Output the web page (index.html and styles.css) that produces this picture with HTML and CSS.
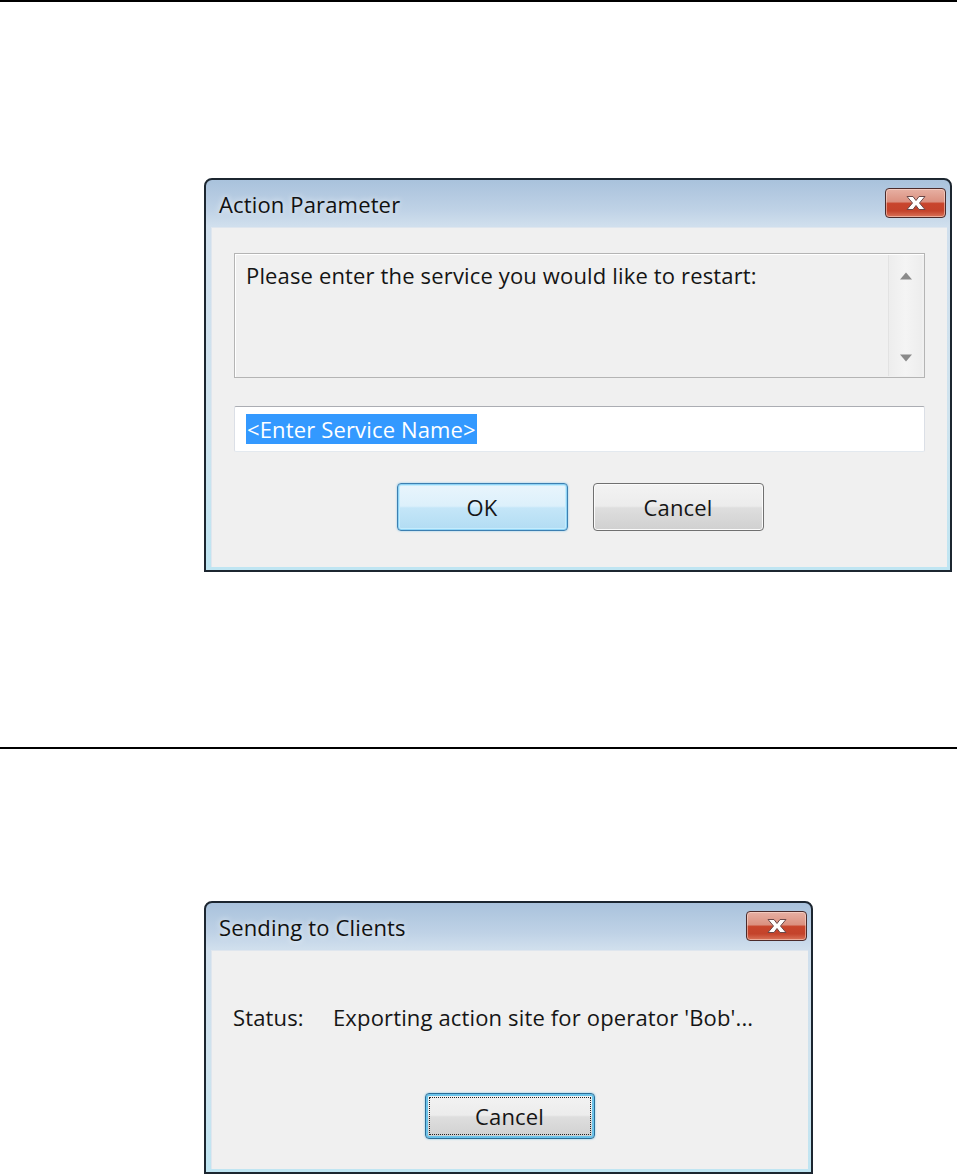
FILE: index.html
```html
<!DOCTYPE html>
<html>
<head>
<meta charset="utf-8">
<title>Dialogs</title>
<link rel="stylesheet" href="styles.css">
</head>
<body>
<div class="rule rule-top"></div>

<div class="dlg dlg-action">
  <div class="titlebar">
    <span class="title">Action Parameter</span>
    <div class="close">
      <svg width="24" height="16" viewBox="0 0 24 16"><path d="M3 1.5 L9 1.5 L12 5.5 L15 1.5 L21 1.5 L15.5 8 L21 14.5 L15 14.5 L12 10.5 L9 14.5 L3 14.5 L8.5 8 Z" fill="#fff" stroke="#6b4848" stroke-width="1" stroke-linejoin="round"/></svg>
    </div>
  </div>
  <div class="client">
    <div class="memo">
      <div class="memo-text">Please enter the service you would like to restart:</div>
      <div class="vscroll">
        <svg class="arrow" width="14" height="8" viewBox="0 0 14 8"><path d="M7 0.5 L13 7.5 L1 7.5 Z" fill="#8a8a8a"/></svg>
        <svg class="arrow" width="14" height="8" viewBox="0 0 14 8"><path d="M1 0.5 L13 0.5 L7 7.5 Z" fill="#8a8a8a"/></svg>
      </div>
    </div>
    <div class="textbox"><span class="sel">&lt;Enter Service Name&gt;</span></div>
    <div class="buttons">
      <div class="btn btn-default">OK</div>
      <div class="btn">Cancel</div>
    </div>
  </div>
</div>

<div class="rule rule-mid"></div>

<div class="dlg dlg-send">
  <div class="titlebar">
    <span class="title">Sending to Clients</span>
    <div class="close">
      <svg width="24" height="16" viewBox="0 0 24 16"><path d="M3 1.5 L9 1.5 L12 5.5 L15 1.5 L21 1.5 L15.5 8 L21 14.5 L15 14.5 L12 10.5 L9 14.5 L3 14.5 L8.5 8 Z" fill="#fff" stroke="#6b4848" stroke-width="1" stroke-linejoin="round"/></svg>
    </div>
  </div>
  <div class="client client-send">
    <div class="status-row">
      <span class="status-label">Status:</span>
      <span class="status-text">Exporting action site for operator 'Bob'...</span>
    </div>
    <div class="buttons buttons-send">
      <div class="btn btn-focus"><span class="focus-rect">Cancel</span></div>
    </div>
  </div>
</div>
</body>
</html>
```

FILE: styles.css
```css
* { box-sizing: border-box; }

body {
  margin: 0;
  background: #fff;
  font-family: "Open Sans", "Noto Sans", sans-serif;
  font-size: 22px;
  letter-spacing: 0.15px;
  color: #151515;
  width: 959px;
}

.rule {
  height: 2px;
  width: 957px;
  background: #000;
}

.dlg {
  margin-left: 204px;
  border: 2px solid #1c2630;
  border-radius: 8px 8px 0 0;
  background: linear-gradient(180deg, #a9c2dc 0px, #bfd2e6 30px, #d0dfed 46px, #cfe3ee 60%, #bfe5f2 100%);
  padding: 0 3px 3px 5px;
  display: flex;
  flex-direction: column;
}

.dlg-action {
  margin-top: 176px;
  width: 748px;
  height: 394px;
}

.rule-mid {
  margin-top: 175px;
}

.dlg-send {
  margin-top: 152px;
  width: 609px;
  height: 273px;
}

.titlebar {
  height: 47px;
  display: flex;
  align-items: flex-start;
  justify-content: space-between;
  flex: none;
}

.title {
  margin-left: 8px;
  margin-top: 9px;
  color: #111;
  text-shadow: 0 0 6px rgba(255,255,255,0.9);
}

.close {
  margin-top: 8px;
  margin-right: 1px;
  width: 61px;
  height: 30px;
  border: 1px solid #4b2b2b;
  border-radius: 4px;
  background: linear-gradient(180deg, #e7b0a3 0%, #db9180 45%, #c8452c 52%, #c4432b 78%, #da745a 100%);
  box-shadow: inset 0 0 0 1px rgba(255,230,220,0.5);
  display: flex;
  align-items: center;
  justify-content: center;
}

.client {
  flex: 1;
  background: #f0f0f0;
  box-shadow: inset 1px 1px 0 #dfe6ee;
  display: flex;
  flex-direction: column;
  padding: 26px 22px 0 23px;
}

.memo {
  height: 125px;
  border: 1px solid #b4b4b4;
  box-shadow: inset 1px 1px 0 #fff;
  display: flex;
  background: #f0f0f0;
}

.memo-text {
  flex: 1;
  padding: 7px 0 0 11px;
  line-height: 28px;
}

.vscroll {
  width: 34px;
  margin: 1px 2px 1px 0;
  border-left: 1px solid #e2e2e2;
  background: linear-gradient(90deg, #ededed 0%, #f4f4f4 50%, #ededed 100%);
  display: flex;
  flex-direction: column;
  justify-content: space-between;
  align-items: center;
  padding: 17px 0 14px 0;
}

.arrow { display: block; }

.textbox {
  margin-top: 28px;
  height: 46px;
  background: #fff;
  border: 1px solid #abadb3;
  border-left-color: #dbdfe6;
  border-right-color: #dbdfe6;
  border-bottom-color: #e3e9ef;
  border-radius: 2px;
  display: flex;
  align-items: center;
  padding-left: 11px;
}

.sel {
  background: #3399ff;
  color: #fff;
  line-height: 30px;
  height: 30px;
  padding: 0 1px;
}

.buttons {
  margin-top: 31px;
  display: flex;
  justify-content: center;
  gap: 25px;
  padding-left: 1px;
}

.btn {
  width: 171px;
  height: 48px;
  border: 1px solid #707070;
  border-radius: 4px;
  background: linear-gradient(180deg, #f3f3f3 0%, #ececec 48%, #dedede 52%, #d0d0d0 100%);
  box-shadow: inset 0 0 0 1px #fbfbfb;
  display: flex;
  align-items: center;
  justify-content: center;
  color: #151515;
}

.btn-default {
  border-color: #3c7fb1;
  background: linear-gradient(180deg, #e9f5fc 0%, #dcf0fb 48%, #c4e6f8 52%, #b2dcf3 100%);
  box-shadow: inset 0 0 0 1px #8fd3f5, inset 0 0 0 2px #c4ecfd, 0 0 2px #7cc4ea;
}

.client-send {
  padding: 0;
  align-items: stretch;
}

.status-row {
  margin-top: 53px;
  padding-left: 22px;
  display: flex;
  line-height: 28px;
}

.status-label {
  width: 100px;
}

.buttons-send {
  margin-top: 62px;
  gap: 0;
  padding-left: 0;
}

.btn-focus {
  width: 170px;
  height: 46px;
  border-color: #2c6d97;
  box-shadow: inset 0 0 0 2px #6cc4ea, 0 0 2px #6cc4ea;
  padding: 3px;
}

.focus-rect {
  width: 100%;
  height: 100%;
  border: 1px dotted #222;
  display: flex;
  align-items: center;
  justify-content: center;
}
```
